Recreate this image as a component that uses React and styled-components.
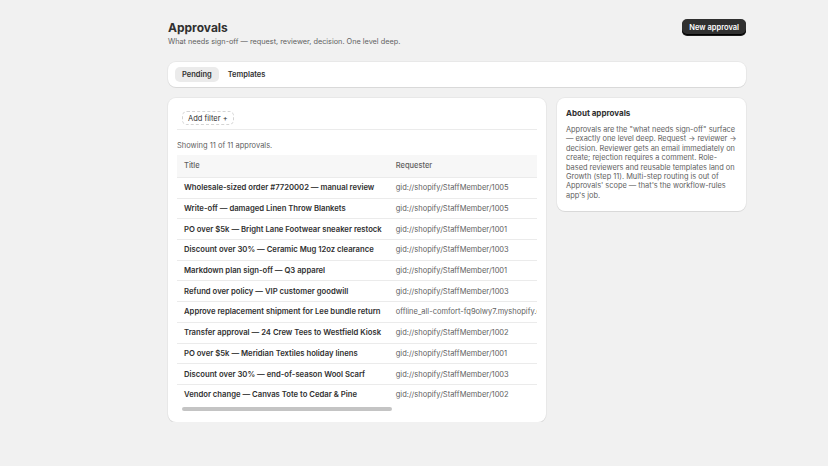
import React, { useState } from "react";
import styled, { createGlobalStyle } from "styled-components";

const GlobalStyle = createGlobalStyle`
  html, body {
    margin: 0;
    padding: 0;
    background: #f1f1f1;
    font-family: Inter, "Noto Sans", "Liberation Sans", sans-serif;
    color: #303030;
  }
`;

const approvals = [
  { id: 1, title: "Wholesale-sized order #7720002 — manual review", requester: "gid://shopify/StaffMember/1005" },
  { id: 2, title: "Write-off — damaged Linen Throw Blankets", requester: "gid://shopify/StaffMember/1005" },
  { id: 3, title: "PO over $5k — Bright Lane Footwear sneaker restock", requester: "gid://shopify/StaffMember/1001" },
  { id: 4, title: "Discount over 30% — Ceramic Mug 12oz clearance", requester: "gid://shopify/StaffMember/1003" },
  { id: 5, title: "Markdown plan sign-off — Q3 apparel", requester: "gid://shopify/StaffMember/1001" },
  { id: 6, title: "Refund over policy — VIP customer goodwill", requester: "gid://shopify/StaffMember/1003" },
  { id: 7, title: "Approve replacement shipment for Lee bundle return", requester: "offline_all-comfort-fq9olwy7.myshopify.com" },
  { id: 8, title: "Transfer approval — 24 Crew Tees to Westfield Kiosk", requester: "gid://shopify/StaffMember/1002" },
  { id: 9, title: "PO over $5k — Meridian Textiles holiday linens", requester: "gid://shopify/StaffMember/1001" },
  { id: 10, title: "Discount over 30% — end-of-season Wool Scarf", requester: "gid://shopify/StaffMember/1003" },
  { id: 11, title: "Vendor change — Canvas Tote to Cedar & Pine", requester: "gid://shopify/StaffMember/1002" },
];

const App = () => {
  const [tab, setTab] = useState("pending");

  return (
    <>
      <GlobalStyle />
      <Page>
        <Header>
          <div>
            <Title>Approvals</Title>
            <Subtitle>What needs sign-off — request, reviewer, decision. One level deep.</Subtitle>
          </div>
          <PrimaryButton>New approval</PrimaryButton>
        </Header>

        <TabsCard>
          <Tab $active={tab === "pending"} onClick={() => setTab("pending")}>
            Pending
          </Tab>
          <Tab $active={tab === "templates"} onClick={() => setTab("templates")}>
            Templates
          </Tab>
        </TabsCard>

        <Layout>
          <MainCard>
            <FilterBar>
              <FilterButton>Add filter +</FilterButton>
            </FilterBar>
            <Count>Showing 11 of 11 approvals.</Count>
            <TableScroll>
              <Table>
                <thead>
                  <tr>
                    <TableHeader>Title</TableHeader>
                    <TableHeader>Requester</TableHeader>
                    <TableHeader>Reviewer</TableHeader>
                    <TableHeader>Status</TableHeader>
                  </tr>
                </thead>
                <tbody>
                  {approvals.map((a) => (
                    <tr key={a.id}>
                      <TitleCell>{a.title}</TitleCell>
                      <TableData>{a.requester}</TableData>
                      <TableData>gid://shopify/StaffMember/1004</TableData>
                      <TableData>Pending</TableData>
                    </tr>
                  ))}
                </tbody>
              </Table>
            </TableScroll>
            <ScrollTrack>
              <ScrollThumb />
            </ScrollTrack>
          </MainCard>

          <SideCard>
            <SideTitle>About approvals</SideTitle>
            <SideText>
              Approvals are the "what needs sign-off" surface — exactly one level deep. Request → reviewer →
              decision. Reviewer gets an email immediately on create; rejection requires a comment. Role-based
              reviewers and reusable templates land on Growth (step 11). Multi-step routing is out of
              Approvals' scope — that's the workflow-rules app's job.
            </SideText>
          </SideCard>
        </Layout>
      </Page>
    </>
  );
};

export default App;

const Page = styled.div`
  width: 578px;
  margin-left: 168px;
  padding-top: 20px;
`;

const Header = styled.div`
  display: flex;
  justify-content: space-between;
  align-items: flex-start;
  margin-bottom: 15px;
`;

const Title = styled.h1`
  margin: 0;
  font-size: 12px;
  line-height: 16px;
  font-weight: 700;
  color: #303030;
`;

const Subtitle = styled.p`
  margin: 0;
  font-size: 7.3px;
  line-height: 11px;
  color: #616161;
`;

const PrimaryButton = styled.button`
  height: 16px;
  margin-top: -1px;
  padding: 0 7px;
  border: none;
  border-radius: 5px;
  background: #303030;
  box-shadow: inset 0 -1px 0 #000, 0 1px 0 #1a1a1a;
  color: #fff;
  font-family: inherit;
  font-size: 7.5px;
  font-weight: 600;
  cursor: pointer;
`;

const Card = styled.div`
  background: #fff;
  border-radius: 8px;
  box-shadow: 0 1px 0 rgba(26, 26, 26, 0.07), 0 0 0 1px rgba(26, 26, 26, 0.04);
`;

const TabsCard = styled(Card)`
  display: flex;
  gap: 2px;
  padding: 5px 7px;
  margin-bottom: 11px;
`;

const Tab = styled.button`
  height: 15px;
  padding: 0 7px;
  border: none;
  border-radius: 5px;
  background: ${(p) => (p.$active ? "#ebebeb" : "transparent")};
  color: #303030;
  font-family: inherit;
  font-size: 7.5px;
  font-weight: 600;
  cursor: pointer;
`;

const Layout = styled.div`
  display: flex;
  gap: 11px;
  align-items: flex-start;
`;

const MainCard = styled(Card)`
  width: 378px;
  padding: 13px 9px 11px;
  box-sizing: border-box;
`;

const FilterBar = styled.div`
  display: flex;
  padding: 0 5px 4px;
  border-bottom: 1px solid #ebebeb;
`;

const FilterButton = styled.button`
  height: 14px;
  padding: 0 5px;
  border: 1px dashed #d4d4d4;
  border-radius: 5px;
  background: #fff;
  color: #303030;
  font-family: inherit;
  font-size: 7.5px;
  cursor: pointer;
`;

const Count = styled.p`
  margin: 10px 0 4px;
  font-size: 7.5px;
  line-height: 11px;
  color: #616161;
`;

const TableScroll = styled.div`
  overflow: hidden;
`;

const Table = styled.table`
  border-collapse: collapse;
  white-space: nowrap;
`;

const TableHeader = styled.th`
  height: 21px;
  padding: 0 7px 1px;
  background: #f7f7f7;
  border-bottom: 1px solid #ebebeb;
  text-align: left;
  font-size: 7.5px;
  font-weight: 500;
  color: #616161;
`;

const TableData = styled.td`
  height: 19.7px;
  padding: 0 7px;
  border-bottom: 1px solid #ebebeb;
  font-size: 7.5px;
  color: #616161;

  tr:last-child & {
    border-bottom: none;
  }
`;

const TitleCell = styled(TableData)`
  font-size: 7.7px;
  font-weight: 600;
  color: #303030;
`;

const ScrollTrack = styled.div`
  padding: 2px 5px 0;
`;

const ScrollThumb = styled.div`
  width: 210px;
  height: 4px;
  border-radius: 2px;
  background: #c4c4c4;
`;

const SideCard = styled(Card)`
  width: 189px;
  padding: 10px 9px 11px;
  box-sizing: border-box;
`;

const SideTitle = styled.h2`
  margin: 0 0 6px;
  font-size: 8px;
  line-height: 11px;
  font-weight: 700;
  color: #303030;
`;

const SideText = styled.p`
  margin: 0;
  font-size: 7.4px;
  line-height: 9.4px;
  color: #616161;
`;
